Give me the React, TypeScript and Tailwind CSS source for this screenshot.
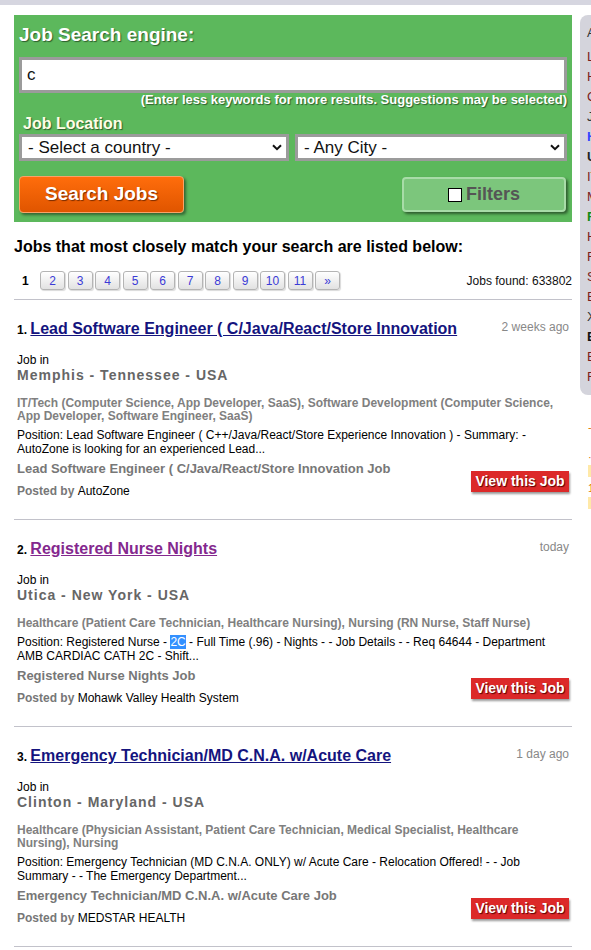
const font = "font-['Liberation_Sans',Arial,sans-serif]";

const JOBS = [
  {
    num: 1,
    title: "Lead Software Engineer ( C/Java/React/Store Innovation",
    titleColor: "text-[#14147e]",
    age: "2 weeks ago",
    place: "Memphis - Tennessee - USA",
    cats: "IT/Tech (Computer Science, App Developer, SaaS), Software Development (Computer Science, App Developer, Software Engineer, SaaS)",
    position: (
      <>
        Position: Lead Software Engineer ( C++/Java/React/Store Experience Innovation ) - Summary: -
        AutoZone is looking for an experienced Lead...
      </>
    ),
    job: "Lead Software Engineer ( C/Java/React/Store Innovation Job",
    company: "AutoZone",
  },
  {
    num: 2,
    title: "Registered Nurse Nights",
    titleColor: "text-[#84288e]",
    age: "today",
    place: "Utica - New York - USA",
    cats: "Healthcare (Patient Care Technician, Healthcare Nursing), Nursing (RN Nurse, Staff Nurse)",
    position: (
      <>
        Position: Registered Nurse - <span className="bg-[#3390ff] text-white">2C</span> - Full Time (.96) -
        Nights - - Job Details - - Req 64644 - Department AMB CARDIAC CATH 2C - Shift...
      </>
    ),
    job: "Registered Nurse Nights Job",
    company: "Mohawk Valley Health System",
  },
  {
    num: 3,
    title: "Emergency Technician/MD C.N.A. w/Acute Care",
    titleColor: "text-[#14147e]",
    age: "1 day ago",
    place: "Clinton - Maryland - USA",
    cats: "Healthcare (Physician Assistant, Patient Care Technician, Medical Specialist, Healthcare Nursing), Nursing",
    position: (
      <>
        Position: Emergency Technician (MD C.N.A. ONLY) w/ Acute Care - Relocation Offered! - - Job
        Summary - - The Emergency Department...
      </>
    ),
    job: "Emergency Technician/MD C.N.A. w/Acute Care Job",
    company: "MEDSTAR HEALTH",
  },
];

const SIDE = [
  { t: "Legal", c: "text-[#7a1c1c]" },
  { t: "Healthcare", c: "text-[#7a1c1c]" },
  { t: "Construction", c: "text-[#7a1c1c]" },
  { t: "Jobs by state", c: "text-[#333]" },
  { t: "Hot jobs", c: "text-[#3344ff] font-bold" },
  { t: "USA", c: "text-[#222] font-bold" },
  { t: "IT/Tech", c: "text-[#7a1c1c]" },
  { t: "Marketing", c: "text-[#7a1c1c]" },
  { t: "Finance", c: "text-[#128a12] font-bold" },
  { t: "Hospitality", c: "text-[#7a1c1c]" },
  { t: "Retail", c: "text-[#7a1c1c]" },
  { t: "Sales", c: "text-[#7a1c1c]" },
  { t: "Banking", c: "text-[#7a1c1c]" },
  { t: "XML feeds", c: "text-[#333]" },
  { t: "Business", c: "text-[#111] font-bold" },
  { t: "Education", c: "text-[#7a1c1c]" },
  { t: "Food", c: "text-[#7a1c1c]" },
];

function Chevron() {
  return (
    <svg width="10" height="7" viewBox="0 0 10 7" className="pointer-events-none absolute right-[7px] top-[10px]">
      <path d="M1 1.2 L5 5.2 L9 1.2" fill="none" stroke="#111" strokeWidth="2" />
    </svg>
  );
}

function Select({ label, className }: { label: string; className: string }) {
  return (
    <div className={`relative ${className}`}>
      <select className="h-[27px] w-full appearance-none border-[3px] border-[#9b9b9b] bg-white pl-[6px] text-[17px] leading-[20px] text-[#111]">
        <option>{label}</option>
      </select>
      <Chevron />
    </div>
  );
}

function SearchBox() {
  return (
    <div className="bg-[#5cb85c] px-[5px] pt-[9px] pb-[9px]">
      <h2 className="text-[19px] font-bold leading-[22px] text-white [text-shadow:1px_1px_1px_#2d5e2d]">
        Job Search engine:
      </h2>
      <input
        readOnly
        value="c"
        className="mt-[11px] block h-[36px] w-full border-[3px] border-[#9b9b9b] bg-white pl-[5px] text-[17px] text-[#111] outline-none"
      />
      <p className="text-right text-[13px] font-bold leading-[14px] text-white [text-shadow:1px_1px_1px_#2d5e2d]">
        (Enter less keywords for more results. Suggestions may be selected)
      </p>
      <p className="mt-[8px] pl-[4px] text-[16px] font-bold leading-[18px] text-[#fffde6] [text-shadow:1px_1px_1px_#2d5e2d]">
        Job Location
      </p>
      <div className="mt-[1px] flex gap-[6px]">
        <Select label="- Select a country -" className="w-[270px]" />
        <Select label="- Any City -" className="flex-1" />
      </div>
      <div className="mt-[15px] flex justify-between pr-[1px]">
        <button className="h-[37px] w-[165px] rounded-[4px] border border-[#f9a368] bg-linear-to-b from-[#ff6d0c] to-[#e05500] text-[19px] font-bold text-white [box-shadow:2px_2px_3px_rgba(0,0,0,0.45)] [text-shadow:1px_1px_1px_#7a2c00]">
          Search Jobs
        </button>
        <button className="mt-[1px] flex h-[35px] w-[164px] items-center justify-center gap-[4px] rounded-[4px] border-2 border-[#a8dca8] bg-[#7cc67c] text-[18px] font-bold text-[#555] [box-shadow:2px_2px_3px_rgba(0,0,0,0.5)]">
          <span className="block h-[14px] w-[14px] border-[1.5px] border-black bg-white" />
          Filters
        </button>
      </div>
    </div>
  );
}

function Pager() {
  const pages = ["2", "3", "4", "5", "6", "7", "8", "9", "10", "11", "»"];
  return (
    <div className="mt-[14px] flex items-center justify-between">
      <div className="flex items-center">
        <span className="w-[26px] pl-[8px] text-[12px] font-bold text-black">1</span>
        <div className="flex gap-[2.5px]">
          {pages.map((p) => (
            <span
              key={p}
              className="flex h-[19px] w-[25px] items-center justify-center rounded-[3px] border border-[#b4b4b4] bg-linear-to-b from-white to-[#e2e2e2] text-[12px] text-[#3b3bd6] [box-shadow:1px_1px_1px_rgba(0,0,0,0.15)]"
            >
              {p}
            </span>
          ))}
        </div>
      </div>
      <span className="text-[12px] text-[#111]">Jobs found: 633802</span>
    </div>
  );
}

function Job({ j }: { j: (typeof JOBS)[number] }) {
  return (
    <div className="border-b border-[#c2c2ca] pt-[19px] pb-[21px] pl-[3px]">
      <div className="flex items-start justify-between">
        <div className="leading-[20px]">
          <span className="text-[12px] font-bold text-black">{j.num}. </span>
          <a className={`text-[16px] font-bold underline ${j.titleColor}`}>{j.title}</a>
        </div>
        <span className="pr-[3px] text-[12px] leading-[16px] text-[#888]">{j.age}</span>
      </div>
      <p className="mt-[13px] text-[12px] leading-[14px] text-black">Job in</p>
      <p className="text-[14px] font-bold leading-[16px] tracking-[1px] text-[#666]">{j.place}</p>
      <p className="mt-[14px] text-[12px] font-bold leading-[13px] text-[#808080]">{j.cats}</p>
      <p className="mt-[5px] text-[12px] leading-[14px] text-black">{j.position}</p>
      <div className="mt-[5px] flex items-center justify-between">
        <div>
          <p className="text-[13px] font-bold leading-[16px] text-[#777]">{j.job}</p>
          <p className="mt-[7px] text-[12px] leading-[14px]">
            <span className="font-bold text-[#777]">Posted by </span>
            <span className="text-black">{j.company}</span>
          </p>
        </div>
        <span className="mr-[3px] mt-[4px] flex h-[21px] w-[98px] items-center justify-center bg-[#dc2929] text-[14px] font-bold text-white [box-shadow:1px_2px_2px_rgba(0,0,0,0.4)] [text-shadow:1px_1px_1px_#5a0000]">
          View this Job
        </span>
      </div>
    </div>
  );
}

function Sidebar() {
  return (
    <div className="ml-[8px] w-[220px] shrink-0">
      <div className="rounded-l-[8px] bg-[#d4d4dc] pt-[10px] pb-[8px] pl-[7px] text-[13px]">
        <p className="leading-[16px] text-[#333]">All categories</p>
        <ul className="mt-[6px]">
          {SIDE.map((s) => (
            <li key={s.t} className={`leading-[20px] ${s.c}`}>
              {s.t}
            </li>
          ))}
        </ul>
      </div>
      <div className="mt-[25px] pl-[8px] text-[11px] leading-[14px]">
        <p className="text-[#e07800]">- New jobs today</p>
        <p className="mt-[16px] text-[#e07800]">· Top employers</p>
        <p className="mt-[1px] h-[12px] w-[60px] bg-[#ffe9a8]" />
        <p className="mt-[4px] text-[#e07800]">1 Featured</p>
        <p className="mt-[2px] h-[12px] w-[60px] bg-[#ffe9a8]" />
      </div>
    </div>
  );
}

export default function App() {
  return (
    <div className={`${font} w-[591px] min-h-[950px] overflow-hidden bg-white`}>
      <div className="h-[5px] bg-[#d6d6e0]" />
      <div className="mt-[10px] flex items-start">
        <main className="ml-[14px] w-[558px] shrink-0">
          <SearchBox />
          <h3 className="mt-[15px] text-[16px] font-bold leading-[20px] text-black">
            Jobs that most closely match your search are listed below:
          </h3>
          <Pager />
          <div className="mt-[9px] border-b border-[#c2c2ca]" />
          {JOBS.map((j) => (
            <Job key={j.num} j={j} />
          ))}
        </main>
        <Sidebar />
      </div>
    </div>
  );
}
